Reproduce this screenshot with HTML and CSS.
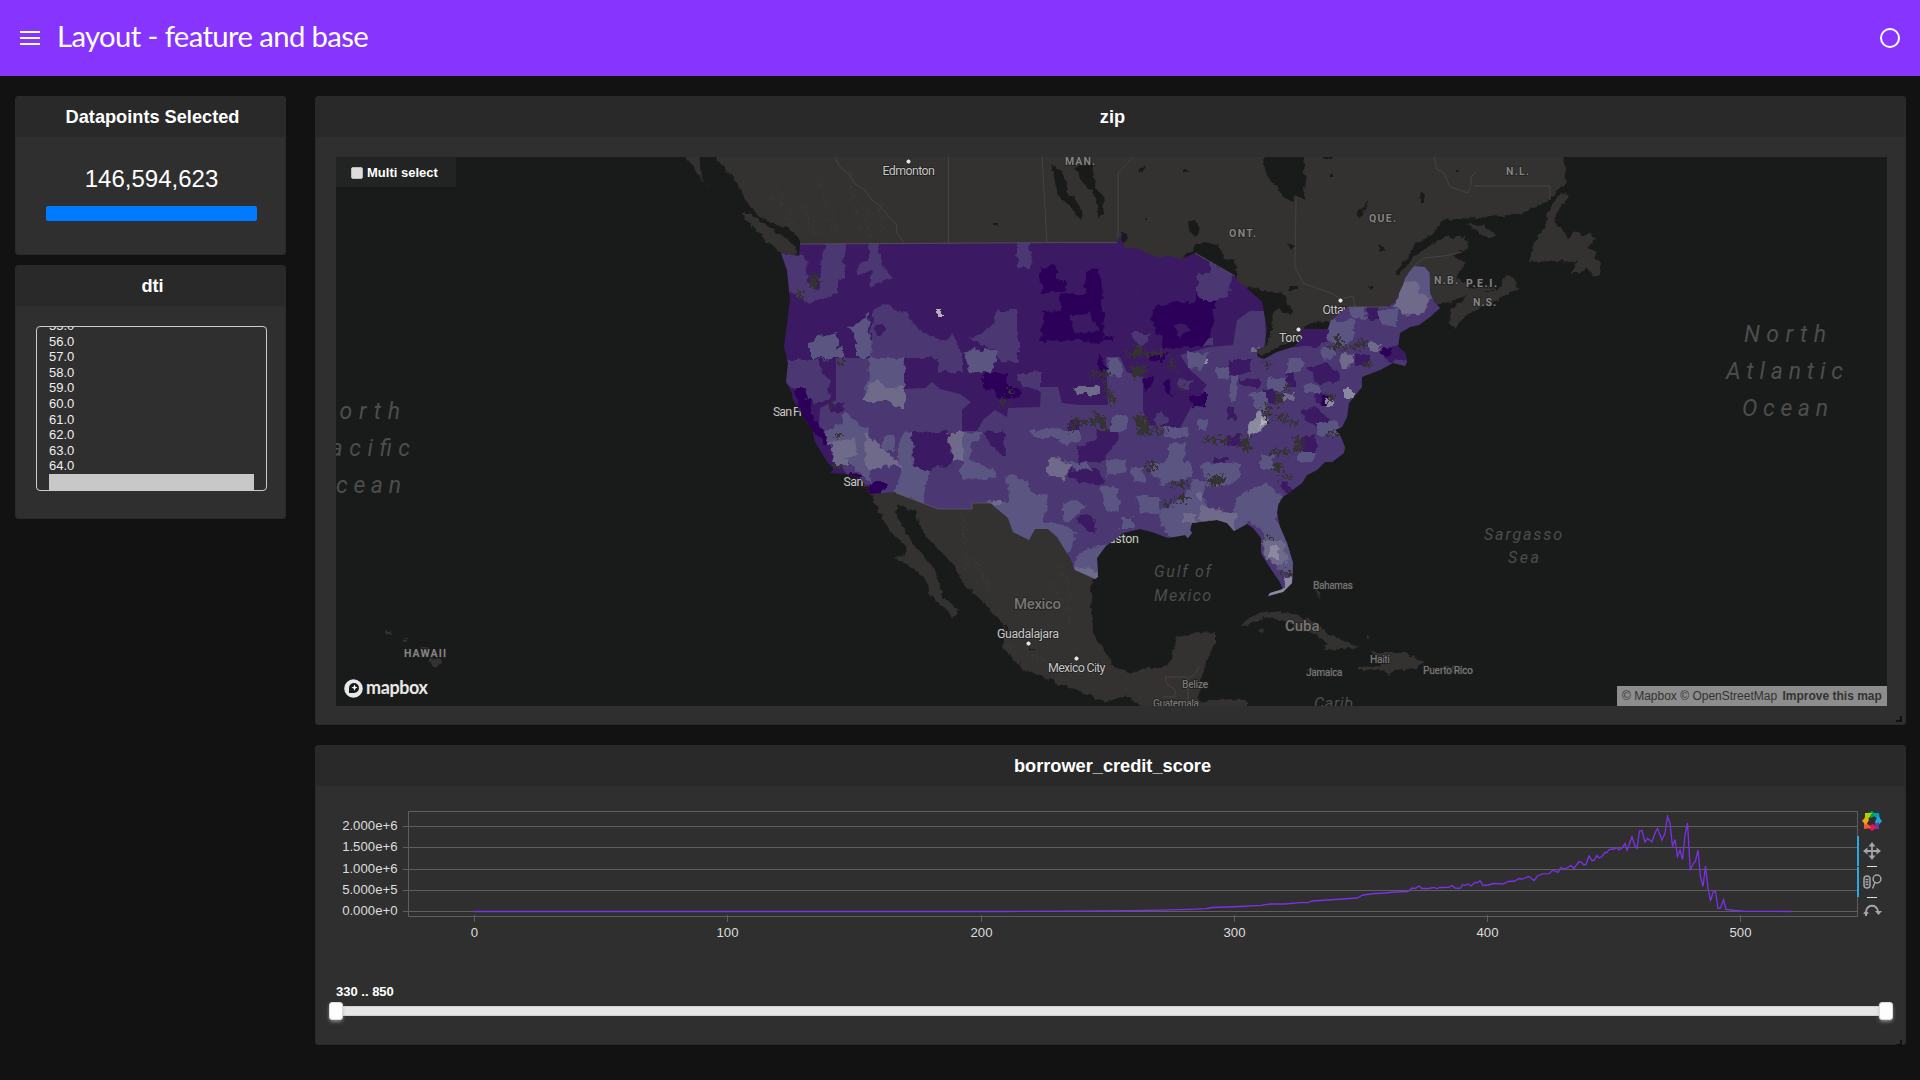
FILE: index.html
```html
<!DOCTYPE html>
<html lang="en">
<head>
<meta charset="utf-8">
<title>Layout - feature and base</title>
<link rel="stylesheet" href="styles.css">
</head>
<body>
<header class="topbar">
  <svg class="menu" viewBox="0 0 20 14"><path d="M0 1h20M0 7h20M0 13h20"/></svg>
  <h1>Layout - feature and base</h1>
  <svg class="busy" viewBox="0 0 22 22"><circle cx="11" cy="11" r="9"/></svg>
</header>
<div class="layout">
  <aside class="side">
    <section class="card count">
      <h2>Datapoints Selected</h2>
      <div class="total">146,594,623</div>
      <div class="progress"></div>
    </section>
    <section class="card dti">
      <h2>dti</h2>
      <div class="list">
        <div>55.0</div><div>56.0</div><div>57.0</div><div>58.0</div><div>59.0</div><div>60.0</div><div>61.0</div><div>62.0</div><div>63.0</div><div>64.0</div><div class="selected"></div>
      </div>
    </section>
  </aside>
  <main class="main">
    <section class="card mapcard">
      <h2>zip</h2>
      <div class="map">
        <svg class="canvas" viewBox="336 157 1551 549">
          <defs>
            <filter id="rough" filterUnits="userSpaceOnUse" x="336" y="157" width="1551" height="549" color-interpolation-filters="sRGB">
              <feTurbulence type="fractalNoise" baseFrequency="0.12" numOctaves="3" seed="4" result="n"/>
              <feDisplacementMap in="SourceGraphic" in2="n" scale="9" xChannelSelector="R" yChannelSelector="G"/>
            </filter>
            <filter id="coast" filterUnits="userSpaceOnUse" x="336" y="157" width="1551" height="549" color-interpolation-filters="sRGB">
              <feTurbulence type="fractalNoise" baseFrequency="0.16" numOctaves="3" seed="9" result="n"/>
              <feDisplacementMap in="SourceGraphic" in2="n" scale="6" xChannelSelector="R" yChannelSelector="G"/>
            </filter>
            <filter id="speckle" filterUnits="userSpaceOnUse" x="336" y="157" width="1551" height="549" color-interpolation-filters="sRGB">
              <feTurbulence type="fractalNoise" baseFrequency="0.3" numOctaves="2" seed="12" result="n"/>
              <feDisplacementMap in="SourceGraphic" in2="n" scale="17" xChannelSelector="R" yChannelSelector="G"/>
            </filter>
            <clipPath id="us"><path d="M781 253L799 256 800 244 1060 242.6 1117 242.7 1120 236 1124 247 1138 249 1149 254 1160 258 1168 256 1183 259 1195 253 1235 276 1238 281 1242 284 1250 291 1262 302 1267 330 1264 347 1257 349 1257 357 1264 359 1277 352 1293 347 1303 338 1300 331 1305 329 1328 329 1331 320 1348 307 1388 307 1395 302 1403 285 1406 276 1414 266 1424.6 267 1429.6 273 1430 293 1434 302 1440 308 1430 317 1419 325 1410 327 1400 333 1398 347 1405 353 1407 362 1405 366 1393 363 1380 370 1362 377 1362 387 1349 403 1347 417 1342 427 1335 430 1340 435 1345 447 1344 453 1332 462 1325 462 1317 470 1307 475 1302 483 1283 497 1278 505 1277 513 1280 527 1287 543 1293 563 1292 583 1283 592 1268 596 1270 593 1283 589 1280 582 1267 563 1261 553 1261 538 1253 528 1247 524 1234 531 1227 523 1217 520 1192 523 1190 530 1192 533 1188 538 1185 535 1168 538 1152 532 1140 529 1123 533 1105 547 1097 558 1098 577 1095 579 1075 570 1070 558 1057 537 1048 529 1035 529 1029 540 1013 532 1008 518 990 503 972 503 972 509 938 509 896 493 896 492 870 494 867 487 860 478 846 474 830 473 834 469 828 463 815 442 813 432 793 400 792 393 786 382 788 363 784 347 790 300 787 270Z"/></clipPath>
          </defs>
          <rect class="water" x="336" y="157" width="1551" height="549"/>
          <g class="land" filter="url(#coast)">
            <path d="M684 150L688 160 697 173 708 189 701 176 699 150Z"/>
            <path d="M740 213L750 213 765 225 780 234 797 247 799 256 783 254 768 243 755 229Z"/>
            <path d="M715 150L718 161 730 173 740 188 747 203 760 217 777 225 788 228 798 238 802 246 812 300 812 400 870 494 888 528 907 547 905 555 895 557 912 568 927 580 928 592 953 617 958 610 943 597 935 570 923 556 912 542 897 517 897 505 915 510 923 533 943 554 960 573 962 583 978 597 1000 620 1008 627 1002 647 1025 670 1045 678 1067 687 1107 702 1126 695 1147 712 1246 712 1246 700 1227 699 1198 702 1200 687 1204 667 1215 643 1215 633 1202 632 1177 637 1172 657 1166 667 1145 668 1130 673 1114 667 1105 652 1093 633 1091 587 1094 575 1092 556 1103 541 1123 527 1150 524 1185 515 1250 500 1275 480 1325 440 1350 375 1390 335 1420 310 1440 305 1469 295 1451 310 1449 323 1455 330 1465 317 1480 308 1495 302 1518 288 1515 279 1507 275 1500 287 1486 292 1469 287 1457 278 1465 262 1453 257 1469 247 1465 237 1446 237 1417 253 1398 276 1396 273 1417 243 1434 233 1442 220 1476 218 1518 215 1549 200 1566 183 1564 150Z"/>
            <path d="M1560 193L1568 195 1560 207 1553 222 1562 228 1568 240 1576 231 1585 237 1590 232 1595 240 1588 248 1597 252 1594 258 1601 262 1600 275 1594 277 1586 267 1579 273 1571 273 1577 262 1556 261 1528 262 1533 252 1534 242 1545 226 1549 210Z"/>
            <path d="M1467 224L1484 226 1497 237 1486 237ZM1467 283L1480 288 1497 287 1482 292Z"/>
            <path d="M1240 627L1250 617 1264 612 1280 612 1298 615 1316 623 1328 633 1341 640 1360 647 1342 649 1324 650 1328 642 1311 633 1300 630 1286 621 1265 617 1250 624Z"/>
            <path d="M1370 652L1404 652 1425 663 1417 668 1396 670 1389 675 1383 670 1360 670 1358 667 1381 666 1379 657ZM1440 667h14v4h-14zM1308 669l14 2-2 4-10-2zM1258 628l7 2-3 3zM1314 588l6 4 1 8-4-6zM1365 636l6 1-4 2z"/>
            <path d="M386 631l5 0 0 4-5-1zM404 637l4 2 0 2-5-1zM420 646l10 2-5 2zM430 657l8 1 4 5-8 6-4-6z"/>
          </g>
          <g class="water" filter="url(#coast)">
            <path d="M1263 150L1266 173 1273 182 1283 196 1293 202 1296 195 1304 200 1306 182 1302 150Z"/>
            <path d="M1074 167L1090 160 1097 187 1104 200 1103 214 1098 218 1097 197 1084 185ZM1051 163L1063 173 1067 187 1065 193 1074 197 1084 215 1080 220 1070 205 1060 199 1055 183Z"/>
            <path d="M1181 259L1203 242 1218 245 1225 258 1235 260 1238 279 1195 254Z"/>
            <path d="M1241 285L1273 292 1282 293 1293 312 1290 315 1277 308 1273 313 1272 330 1265 349 1262 302Z"/>
            <path d="M1255 351L1262 356 1277 347 1303 338 1306 346 1264 362ZM1303 328L1310 323 1330 322 1330 331 1303 331Z"/>
            <path d="M1188 222l8-2 3 10-4 6-5-3zM1140 168l6-1-2 4-5 1zM1184 169h4v3h-4zM1357 214l12-14-2 5-8 14zM1421 190l4 6-2 8-4 0zM1377 244l8 5-5 3zM1288 243l8 4-5 3zM1290 286h8v3h-8zM1368 286l5 0-3 4zM1455 170l5 1-3 3zM1145 218h4v2h-4zM1330 174h4v3h-4zM1320 157h16l-8 3zM1120 232l8 4-5 8z"/>
            <path d="M993 223h5v2h-5zM1028 648h7v2h-7z"/>
          </g>
          <path class="border" d="M835 157l4 9 10 8 6 10 10 6 7 10 9 7 10 12 5 4 1 10 7 10M948.500 157v86M1042 157l5 86M1133 157l-15 16v65M1296 200l-1 67 8 16 13 5 15 5 10 6 12-3 2 11M1434 157l3 12 7 4 6 14 10 3 8 3 3-8 0-8 5-5M1474 186h76v14M1414 266l10-8 20-2 18-4M1187 677h-22l2 7 8 6v7h-12M1188 706v-28l6-3 5-8"/>
          <g class="relief" filter="url(#speckle)"><path d="M760 190l25 20M775 185l20 45M800 200l18 36M820 180l15 50M850 170l10 66M865 200l4 38M880 205l2 30M962 510l6 60M975 560l20 40M1050 580l20 40M1000 610l10 45M1030 655l50 20M1060 560l10 40"/></g>
          <g class="city">
            <text x="882.500" y="175" textLength="52.500">Edmonton</text><text x="1322.500" y="314" textLength="30">Ottaw</text><text x="1279" y="342" textLength="40">Toronto</text><text x="773" y="415.500" textLength="30">San Fr</text><text x="843.500" y="485.500" textLength="20">San</text><text x="1093" y="542.500" textLength="46">Houston</text><text x="997" y="638" textLength="62">Guadalajara</text><text x="1048" y="672" textLength="57.500">Mexico City</text>
          </g>
          <g clip-path="url(#us)">
            <rect class="p1" x="780" y="230" width="670" height="380"/>
            <path class="m" d="M836 358H904V389L925 388 932 382 940 389 960 394 971 402 962 410V431H977L983 420 995 410 1007 417 1008 408 1040 407 1041 387 1058 387 1062 403 1080 405 1108 405 1106 357 1120 357 1127 372 1143 377 1143 410 1148 425 1180 428 1195 400 1207 385 1190 370 1180 355 1210 347 1233 345 1237 320 1250 311 1265 311 1266 347 1300 347 1340 300 1440 260V600H1060L866 500 845 472 835 455 825 435 819 425 820 408 836 400Z"/>
            <g filter="url(#rough)">
              <path class="m" d="M775 250L806 258 808 283 820 290 820 267 827 240 848 240 843 263 847 278 837 280 837 293 820 300 807 302 785 290ZM869 240H880V262L893 278 870 286V273L857 275 860 263 869 262ZM1017 238H1027L1032 253 1031 267H1017ZM872 313L883 304 895 308 900 315 907 313 918 330 940 340 953 335 960 350 963 372H938V358H870ZM997 310H1018V363L1000 362 993 350 970 338 982 333 995 323ZM780 359H827L823 373 831 383 828 400 813 404 798 390 780 382ZM1017 373H1041V392L1022 387ZM1198 273L1210 272V262L1232 275 1230 290 1218 300 1205 305 1198 293ZM1130 333H1150L1148 343 1137 345ZM1200 337h12v8h-12zM1180 378l12 3-4 10-10-4zM1150 418l12-6 6 8-10 8z"/>
              <path class="p1" d="M912 432L940 432 945 429 952 433 947 443 953 455 952 463 927 471 913 468ZM983 432H1004L1005 455 998 455 990 443ZM1075 520L1085 513 1097 520 1093 533 1085 528ZM1070 470L1095 468 1105 480 1100 487 1070 478ZM1077 450L1100 435 1115 445 1100 463 1085 458ZM1228 360h22v10l-12 6h-10zM1227 407h8v13h-8zM1238 380h22v6h-22zM1303 410l15-3 12 15-12 5-14-8zM1287 367h8v20h-8zM1302 436h14v16h-14zM1367 306h11v14h-11zM1387 345h18l2 15-14 2-8-5zM1227 435h13v12h-13zM1215 457h12v6h-12zM1095 430h22v14h-18zM1078 447h20v15h-20zM1070 420h10v10h-10zM1306 367l20-4 14 10-5 10-18 0zM1265 390l14 2-3 10-10-1zM1296 329h31v14l-12 4-15-2zM1281 480l14 8-8 10zM1355 355h14v10h-14zM1160 382h8v8h-8zM1315 393l16 2-3 10-12-2zM875 325l8-2 0 10-5 2zM818 360h9l-2 12-5-4zM828 402l18 2-4 8-12 0z"/>
              <path class="d" d="M1039 267L1055 265 1057 277 1068 283 1065 293H1042ZM1060 295L1085 293 1085 273 1098 268 1102 293 1104 343 1090 342 1073 340 1040 341 1045 315 1041 313 1061 310ZM1152 312L1157 303 1193 302 1197 293 1203 302 1218 302 1212 317 1210 337 1200 347 1162 348 1160 337 1153 327ZM983 373H1008L1007 387 1022 390 1018 397 1000 400 993 390 983 388ZM1098 353L1108 370 1100 377ZM1142 380l12-2-2 10-8 4zM1162 382l8-3 2 16-8-4zM1188 397l18-4v12l-12 3zM793 390l12-2 8 30 18 22-6 6-20-24zM868 482l14-2 4 6-8 9-12 0zM850 470l12 6-4 6-10-6zM1150 352h16l-4 12-12-4zM1105 335h8v5h-8zM1382 347h10v8h-10zM1322 396h6v10h-6z"/>
              <path class="p1" d="M1069 315L1090 314 1099 330 1092 333 1073 332ZM1173 327l10-4 9 7-12 7z"/>
              <path class="l" d="M810 342L820 337 837 333V347H843V358H810ZM849 328L868 315 870 340 873 350 870 357H856V337ZM963 353L975 347 977 350H998L992 372H970ZM870 358H904V387L883 385 878 380 865 397 867 383ZM843 410L868 432 864 460 870 482 860 473 850 463 837 458 823 433 843 423ZM898 445L905 432H912L913 467 928 470 923 503 892 493 902 477 897 457ZM883 435h11v15h-11zM962 432H983L973 443 971 462 993 468 995 478 962 479ZM985 500L1010 500 1007 483 1010 473 1018 478 1029 480V492L1048 495 1045 520 1062 525 1076 532 1072 548 1060 565 1040 550 1029 552 1005 535ZM1062 502L1073 500 1085 507 1070 522 1062 517ZM1077 557L1087 550 1106 545 1106 585 1070 572ZM1065 460L1088 463 1090 473 1072 468ZM1030 432L1053 427 1077 433 1078 443 1067 445 1060 437 1032 437ZM1217 368h12l0 10-12 1zM1230 377h7v26h-7zM1267 378h20v12h-20zM1287 358h16v14h-16zM1250 393h17v20l-12-4zM1327 320h26v20l-12 6-14-5zM1348 300h18v20l-15-2zM1377 310h22l-4 17-16-3zM1108 357h10l4 18-14 2zM1110 415h18v16h-18zM1165 427h22v10h-22zM1060 430h18v13h-18zM1105 460h22l-3 13-18 2zM1167 443h20l-5 25-15-5zM1297 452h20l-6 10-14 0zM1317 423h20v12h-20zM1187 353h20l-4 17-16-3zM1130 467h12l2 14-10 3zM1152 462h40v16l-28 6-12-6zM1200 464h40v14l-12 8-20 0zM1100 488h18l2 22-14 0zM1135 497h25v18l-20-3zM1198 420h10v8h-10zM1160 513l30-22 15 10 10 30-28 12-25-12zM1235 498L1267 482 1280 496 1276 520 1300 550 1300 590 1282 572 1262 548 1262 530 1248 520 1234 535ZM1120 517h14v12h-14zM1260 455h14v14h-14zM1192 480l14 2-4 16-12-4zM1403 285L1414 260 1425 260 1440 273V300L1418 293 1395 302ZM1305 385l14 0 0 10-14-2zM1320 350l12-3 4 10-14 2z"/>
              <path class="ll" d="M862 401L870 385 878 380 883 385 904 387V407H895L887 401ZM866 432L903 468 888 465 875 468 868 473 864 460ZM830 442L855 438 857 453 843 460 835 463ZM950 432H962V460H953L952 448 946 443ZM990 500h10v5h-10zM1070 566L1104 572V585L1085 580ZM1048 460L1060 457 1071 467 1063 480 1048 475ZM1074 387H1100V394H1077ZM1402 282L1417 281 1419 292 1432 297 1424 313 1409 317 1394 307ZM1200 505l20 5 16 3-2 20-10-6-25-7zM1184 514h12v8h-12zM1262 540h20l5 22-9 3-12-6zM1340 356l14-2 0 8-12 10zM1283 393h12v8h-12zM1370 343h10v8h-10zM836 460h14v5h-14zM1252 348h8v4h-8zM1197 492h5v8h-5z"/>
              <path class="m" d="M1270 567l14 5 6-1-2 8-8 8-14-14zM1284 528l8 10-8 3z"/>
              <path class="lll" d="M1247 425L1260 411 1270 421 1262 430 1248 436ZM1343 390h10v8h-10zM1325 398h7v9h-7zM1270 547h9v12h-9zM1283 578h10v10h-6zM1204 359h4v4h-4zM1264 592l22-6 6-10 2 16-26 8z"/>
              <path class="white" d="M1260 418L1268 420 1260 428ZM938 310h4v5h3v2h-7z"/>
            </g>
            <g class="hole" filter="url(#speckle)">
              <path d="M808 277l9-2 4 12-9 2zM796 293h7v6h-7zM839 360h5v7h-5zM1126 352h40v4h-40zM1131 366h14v11h-14zM1135 345h6v12h-6zM1090 372h20v4h-20zM1102 378l14 22-6 6-8-24zM1092 412l12 4 6 16-8-2zM1134 416h12l6 18-12 2zM1152 428h14v4h-14zM1098 420h-26v4h26zM1204 438h26v4h-26zM1240 437h10v13h-10zM1270 450h20v4h-20zM1273 463h10v9h-10zM1280 476h14v3h-14zM1146 462h10v8h-10zM1208 476l18 0-4 10-10 0zM1172 482h16v4h-16zM1178 494h8v8h-8zM1162 502h10v4h-10zM1265 405h4v18h-4zM1275 415h12v4h-12zM1283 421h14v3h-14zM1328 346h30v3h-30zM1335 336h6v10h-6zM1363 363h10v4h-10zM1325 395h10v5h-10zM1328 431h12v4h-12zM1264 362h5v5h-5zM1000 400h8v5h-8zM1008 388h4v6h-4zM1294 437h8v14h-8zM1283 572h9v3h-9zM1269 537h4v3h-4zM832 465h10v4h-10zM837 434h4v4h-4zM830 403h6v3h-6zM1070 425h4v8h-4zM1275 394h8v10h-8zM1135 288h2v2h-2zM1356 340h10v8h-10zM1175 368h4v4h-4zM1180 387h4v4h-4zM1285 385h4v6h-4zM1170 355h4v14h-4z"/>
            </g>
          </g>
          <path class="coastline" d="M800 244L1060 242.6 1117 242.7M1195 253L1235 276M1348 307H1388M896 493L938 509H972V503H990"/>
          <g class="dots"><circle cx="908.500" cy="161.500" r="2.600"/><circle cx="1340.500" cy="300.500" r="2.600"/><circle cx="1298.500" cy="329.500" r="2.600"/><circle cx="1028.500" cy="643.500" r="2.600"/><circle cx="1076.500" cy="658.500" r="2.600"/></g>
          <g class="region">
            <text x="1065" y="165" textLength="30">MAN.</text><text x="1506" y="175" textLength="23">N.L.</text><text x="1369" y="222" textLength="27">QUE.</text><text x="1229" y="237" textLength="27">ONT.</text><text x="1434" y="284" textLength="24">N.B.</text><text x="1466" y="287" textLength="31">P.E.I.</text><text x="1473" y="306" textLength="23">N.S.</text><text x="404" y="657" textLength="42">HAWAII</text>
          </g>
          <g class="country">
            <text class="big" x="1014" y="608.500" textLength="47">Mexico</text><text class="big" x="1285" y="631" textLength="34.500">Cuba</text><text x="1313" y="589" textLength="40">Bahamas</text><text x="1370" y="663" textLength="20">Haiti</text><text x="1306" y="675.500" textLength="36.500">Jamaica</text><text x="1423" y="674" textLength="50">Puerto Rico</text><text x="1182" y="688" textLength="26">Belize</text><text x="1153" y="707" textLength="46">Guatemala</text>
          </g>
          <g class="sea">
            <text class="ocean" x="1744" y="342" textLength="82">North</text><text class="ocean" x="1726" y="379" textLength="117">Atlantic</text><text class="ocean" x="1742" y="416" textLength="86">Ocean</text>
            <text class="ocean" x="317" y="419" textLength="83">North</text><text class="ocean" x="310" y="455.500" textLength="100">Pacific</text><text class="ocean" x="315" y="492.500" textLength="86">Ocean</text>
            <text x="1154" y="577" textLength="57">Gulf of</text><text x="1154" y="601" textLength="57">Mexico</text><text x="1484" y="539.500" textLength="78">Sargasso</text><text x="1508" y="563" textLength="31">Sea</text><text x="1314" y="709" textLength="39">Carib</text>
          </g>
          <g class="logo"><circle cx="353.500" cy="688.500" r="9.300"/><path d="M349 693v-5a5 5 0 1 1 5 5z"/><path class="star" d="M354.500 684.500l.9 2.200 2.100.9-2.100.9-.9 2.200-.9-2.200-2.100-.9 2.100-.9z"/><text x="366" y="693.500" textLength="62">mapbox</text></g>
        </svg>
        <label class="multi"><span class="check"></span>Multi select</label>
        <div class="credits"><span>© Mapbox</span> <span>© OpenStreetMap</span> <b>Improve this map</b></div>
      </div>
      <svg class="grip" viewBox="0 0 6 6"><path d="M6 0v6H0V4h4V0z"/></svg>
    </section>
    <section class="card chartcard">
      <h2>borrower_credit_score</h2>
      <svg class="chart" viewBox="336 800 1551 150">
        <path class="grid" d="M403 826.500H1857M403 847.500H1857M403 869.500H1857M403 890.500H1857M403 911.500H1857M408.500 811.500H1857.500V916.500H408.500ZM474.500 915v7M727.500 915v7M981.500 915v7M1234.500 915v7M1487.500 915v7M1740.500 915v7"/>
        <path class="line" d="M474.500 911.500H1000L1108 910.800 1150 910.300 1190 909.300 1206 908.700 1212 907.500 1240 906.500 1261 905.300 1270 904 1285 904 1300 902.600 1308 902.700 1312 901 1335 899.500 1357 898 1363 895 1375 893.500 1385 893 1395 892 1408 891.500 1412 888 1415 888.500 1419 886 1422 888.500 1428 888.500 1434 887.500 1437 888.500 1440 887.500 1449 887.300 1452 885.500 1455 888 1460 888.300 1463 884.500 1465 885.500 1468 884 1471 886 1475 882.500 1478 882.500 1480 880.500 1483 885.500 1488 885 1494 883.500 1503 884 1508 881.500 1515 881 1519 878.500 1522 879 1529 876.500 1534 880.500 1538 875.500 1543 873.800 1549 873.700 1553 870 1558 872.300 1561 867.500 1565 869 1571 865.500 1574 868.500 1579 861.500 1581 862 1584 865 1586 864.500 1589 856 1592 860.500 1594 860.500 1597 855.500 1599 858 1602 856.500 1605 852.500 1607 852.500 1609 849.500 1614 849 1617 847.500 1619 850 1622 848 1625 843.500 1627 850 1629 845 1632 836.500 1635 846 1637 848.500 1639.500 831 1642 830.500 1645 842 1647.500 838.500 1652 842 1655 833 1657.500 828.500 1662 840 1665 833 1667.500 816.500 1670 823 1672.500 846.500 1675 839.500 1677.500 856.500 1680 850 1682.500 859.500 1685 835 1687.500 823 1690.300 870.500 1693 864 1695.500 861 1698 850 1700.500 877 1703 886.500 1705.500 866 1708 888 1710.500 901 1713 892 1715.500 891.500 1718 908.500 1720.500 908 1723.500 899.500 1726 909.500 1735 910.500 1745 911.300 1791 911.500"/>
        <g class="ytext"><text x="397.500" y="830">2.000e+6</text><text x="397.500" y="851">1.500e+6</text><text x="397.500" y="873">1.000e+6</text><text x="397.500" y="894">5.000e+5</text><text x="397.500" y="915">0.000e+0</text></g>
        <g class="xtext"><text x="474.500" y="937">0</text><text x="727.500" y="937">100</text><text x="981.500" y="937">200</text><text x="1234.500" y="937">300</text><text x="1487.500" y="937">400</text><text x="1740.500" y="937">500</text></g>
        <g transform="translate(1872 821)">
          <path fill="#009f4d" d="M-4-8L0-10 5-6-1-3-4-5z"/><path fill="#00a0a8" d="M1-8L7-8 8-1 3-4z"/><path fill="#22a6e0" d="M6-5L10 0 5 6 3 1z"/><path fill="#7b3392" d="M7 1L7 8 0 8 3 3z"/><path fill="#e6145b" d="M4 7L0 10-5 6 1 3z"/><path fill="#f15a29" d="M-1 7L-8 8-8 1-3 4z"/><path fill="#f9a01b" d="M-6 4L-10 0-5-6-3-1z"/><path fill="#b4ce00" d="M-7-1L-7-8 0-8-3-3z"/>
        </g>
        <path class="active" d="M1858 836v30M1858 867v30"/>
        <path class="dash" d="M1867 866.500h10M1867 897.500h10"/>
        <path class="tool" d="M1872 844v14M1865 851h14"/><path class="toolfill" d="M1872 842l3.500 4.500h-7zM1872 860l3.500-4.500h-7zM1863 851l4.500-3.500v7zM1881 851l-4.500-3.500v7z"/>
        <path class="thin" d="M1864 879a3 3 0 0 1 6 0v6a3 3 0 0 1-6 0zM1865.500 879.500h3M1865.500 882h3M1865.500 884.500h3"/><circle class="thin" cx="1877" cy="879" r="3.900"/><path class="thin" d="M1875 882.500l-2.500 6"/>
        <path class="tool" d="M1866 911c2-7 10-7 12 0"/><path class="toolfill" d="M1863 913.500l3-3 3 3-2 .5v2h-2v-2zM1875 911h7l-3.500 4z"/>
      </svg>
      <div class="range">330 .. 850</div>
      <div class="slider"><i></i><i></i></div>
      <svg class="grip low" viewBox="0 0 6 6"><path d="M6 0v6H0V4h4V0z"/></svg>
    </section>
  </main>
</div>
</body>
</html>
```
FILE: styles.css
```css
* { box-sizing: border-box; }
body { margin: 0; height: 1080px; overflow: hidden; background: #121212; color: #fff; font-family: "Liberation Sans", Arial, sans-serif; font-size: 13px; }
.topbar { height: 76px; background: #8735fe; display: flex; align-items: center; padding: 0 19px 0 20px; }
.topbar h1 { flex: 1; margin: 0 0 4px 17px; font: 400 29.3px/40px Lato, sans-serif; letter-spacing: -0.62px; }
.menu { width: 20px; height: 14px; fill: none; stroke: #fff; stroke-width: 2; }
.busy { width: 22px; height: 22px; fill: none; stroke: #fff; stroke-width: 2; }
.layout { display: flex; gap: 29px; padding: 20px 14px 0 15px; }
.side { width: 271px; display: flex; flex-direction: column; gap: 10px; }
.main { flex: 1; display: flex; flex-direction: column; gap: 20px; }
.card { position: relative; background: #2f2f2f; border: 1px solid #2a2a2a; border-radius: 3px; }
.card h2 { margin: 0; height: 40px; padding-left: 4px; background: #292929; text-align: center; font-size: 18.2px; line-height: 41px; }
.count { height: 159px; }
.dti { height: 254px; }
.total { margin-top: 28px; padding-left: 2px; font-size: 24px; line-height: 28px; text-align: center; }
.progress { width: 211px; height: 15px; margin: 13px 0 0 30px; border-radius: 2px; background: #007bff; }
.list { width: 231px; height: 165px; margin: 20px 0 0 20px; padding: 0 12px; border: 1px solid #ccc; border-radius: 4px; overflow: hidden; color: #eee; }
.list div { height: 15.6px; line-height: 15.6px; }
.list div:first-child { margin-top: -9px; }
.list .selected { height: 17px; background: #c8c8c8; }
.mapcard { height: 629px; }
.map { position: relative; width: 1551px; height: 549px; margin: 20px 0 0 20px; overflow: hidden; background: #191b1a; }
.canvas { display: block; width: 1551px; height: 549px; }
.water { fill: #191b1a; }
.land { fill: #343230; }
.border { fill: none; stroke: #454443; }
.coastline { fill: none; stroke: #605c62; stroke-width: .7; }
.relief { fill: none; stroke: #3c3a38; stroke-width: 1; }
.p1 { fill: #3b1a63; }
.m { fill: #4b3772; }
.d { fill: #2c0058; }
.l { fill: #5a5581; }
.ll { fill: #6f6a8a; }
.lll { fill: #8b899f; }
.white { fill: #b3b0b8; }
.hole { fill: #353331; }
.canvas text { font-family: Roboto, "Open Sans", sans-serif; paint-order: stroke; stroke: #20201f; stroke-width: 1.5px; }
.city text { font-size: 12.5px; fill: #c6c6c5; }
.dots { fill: #e4e4e4; stroke: #222; stroke-width: 1; }
.region text { font-size: 10.5px; font-weight: 700; fill: #858483; }
.country text { font-size: 10.5px; font-weight: 500; fill: #777675; }
.country .big { font-size: 15px; }
.canvas .sea text { font-size: 16px; font-style: italic; font-weight: 400; fill: #4c4d4d; stroke: none; }
.canvas .sea .ocean { font-size: 23px; }
.logo { fill: #e8e8e8; }
.logo path { fill: #191b1a; }
.logo .star { fill: #fff; }
.canvas .logo text { font-family: Lato, sans-serif; font-size: 18px; font-weight: 700; }
.multi { position: absolute; left: 0; top: 0; width: 120px; height: 30px; padding-left: 15px; display: flex; align-items: center; gap: 4px; background: #222323; font-weight: 700; line-height: 34px; padding-top: 2px; }
.check { width: 12px; height: 12px; border: 1px solid #bbb; border-radius: 2px; background: #ddd; }
.credits { position: absolute; right: 0; bottom: 0; width: 270px; height: 20px; padding: 0 5px; background: #8c8d8c; color: #333; font-size: 12px; line-height: 20px; white-space: nowrap; }
.credits b { margin-left: 2px; }
.grip { position: absolute; right: 3px; bottom: 2px; width: 6px; height: 6px; fill: #111; }
.low { bottom: -2px; }
.chartcard { height: 300px; }
.chart { display: block; width: 1551px; height: 150px; margin: 14px 0 0 20px; }
.grid { fill: none; stroke: #5e5e5e; }
.line { fill: none; stroke: #7c30e8; stroke-width: 1.3; }
.chart text { font-size: 13.2px; fill: #ddd; }
.ytext { text-anchor: end; }
.xtext { text-anchor: middle; }
.active { stroke: #26aae1; stroke-width: 2; }
.dash { stroke: #ddd; }
.tool { fill: none; stroke: #a1a6a9; stroke-width: 1.8; }
.toolfill { fill: #a1a6a9; }
.thin { fill: none; stroke: #a1a6a9; stroke-width: 1.5; }
.range { margin: 34px 0 0 20px; font-weight: 700; line-height: 16px; }
.slider { display: flex; justify-content: space-between; align-items: center; width: 1550px; height: 10px; margin: 6px 0 0 20px; background: #e6e6e6; border: solid #d0d0d0; border-width: 1px 0; }
.slider i { width: 14px; height: 18px; margin: 0 -7px; border: 1px solid #d9d9d9; border-radius: 3px; background: #fdfdfd; box-shadow: 0 2px 4px -1px #aaa; }
```
